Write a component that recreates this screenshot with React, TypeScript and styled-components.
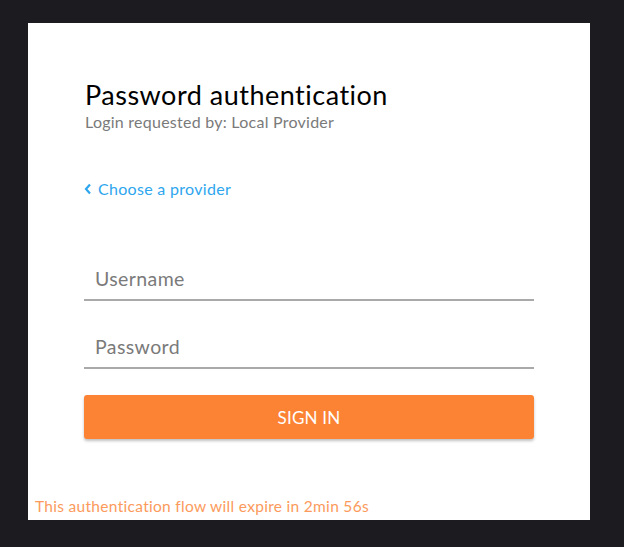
import React from "react";
import styled, { createGlobalStyle } from "styled-components";

const GlobalStyle = createGlobalStyle`
  html, body {
    margin: 0;
    padding: 0;
    background: #1c1b20;
    font-family: Lato, "Open Sans", sans-serif;
  }
`;

const Page = styled.div`
  width: 624px;
  height: 547px;
  box-sizing: border-box;
  padding: 23px 34px 27px 28px;
`;

const Card = styled.div`
  width: 562px;
  height: 497px;
  background: #ffffff;
  display: flex;
  flex-direction: column;
  box-sizing: border-box;
  padding-top: 56px;
`;

const Body = styled.div`
  display: flex;
  flex-direction: column;
  padding: 0 56px;
`;

const Title = styled.h1`
  margin: 0;
  padding-left: 1px;
  font-size: 27px;
  line-height: 32px;
  font-weight: 400;
  color: #000;
  letter-spacing: 0.5px;
`;

const Subtitle = styled.div`
  margin-top: 1px;
  padding-left: 1px;
  font-size: 16px;
  line-height: 19px;
  letter-spacing: 0.25px;
  color: #7a7a7a;
`;

const BackLink = styled.a`
  margin-top: 48px;
  display: flex;
  align-items: center;
  gap: 6px;
  font-size: 16px;
  line-height: 20px;
  letter-spacing: 0.3px;
  color: #2ea6ee;
  text-decoration: none;
  cursor: pointer;
`;

const Field = styled.input<{ $gap: number }>`
  margin-top: ${(p) => p.$gap}px;
  height: 41px;
  border: none;
  border-bottom: 2px solid #a9a9a9;
  padding: 0 11px;
  font-family: inherit;
  font-size: 19.5px;
  letter-spacing: 0.4px;
  color: #333;
  outline: none;
  background: transparent;
  &::placeholder {
    color: #7a7a7a;
  }
`;

const Button = styled.button`
  margin-top: 26px;
  height: 44px;
  border: none;
  border-radius: 3px;
  background: #fc8334;
  color: #fff;
  font-family: inherit;
  font-size: 17px;
  letter-spacing: 0.2px;
  box-shadow: 0 2px 3px rgba(0, 0, 0, 0.25);
  cursor: pointer;
`;

const Footer = styled.div`
  margin-top: auto;
  padding: 0 7px 5px;
  font-size: 15.5px;
  line-height: 18px;
  letter-spacing: 0.3px;
  color: #fc9a5c;
`;

export default function App() {
  return (
    <>
      <GlobalStyle />
      <Page>
        <Card>
          <Body>
            <Title>Password authentication</Title>
            <Subtitle>Login requested by: Local Provider</Subtitle>
            <BackLink>
              <svg width="8" height="12" viewBox="0 0 8 12">
                <path d="M6 1.5 L2 6 L6 10.5" fill="none" stroke="#2ea6ee" strokeWidth="2.2" />
              </svg>
              Choose a provider
            </BackLink>
            <Field $gap={59} placeholder="Username" />
            <Field $gap={25} type="password" placeholder="Password" />
            <Button>SIGN IN</Button>
          </Body>
          <Footer>This authentication flow will expire in 2min 56s</Footer>
        </Card>
      </Page>
    </>
  );
}
